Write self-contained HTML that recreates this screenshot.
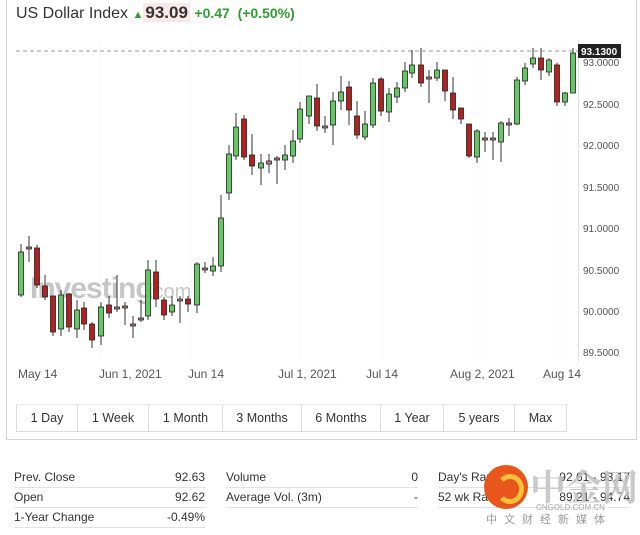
<!DOCTYPE html>
<html><head><meta charset="utf-8"><style>
body{margin:0;width:640px;height:535px;background:#fff;font-family:"Liberation Sans",Arial,sans-serif;position:relative;overflow:hidden;color:#333}
.box{position:absolute;left:6px;top:-2px;width:629px;height:441px;border:1px solid #d4d4d4;border-top:none}
.t{position:absolute;top:3px;left:16px;font-size:16px;color:#333;white-space:nowrap}
.btns{position:absolute;left:16px;top:404px;height:26px;display:flex;border:1px solid #ddd;border-top:1px solid #e8e8e8}
.btns div{border-right:1px solid #ddd;font-size:12.5px;color:#333;display:flex;align-items:center;justify-content:center;height:26px}
.btns div:last-child{border-right:none}
.st{position:absolute;font-size:12px;color:#333}
.row{position:absolute;height:20px;border-bottom:1px solid #e3e3e3;display:flex;justify-content:space-between;align-items:center}
</style></head><body>
<div class="box"></div>
<div class="t">US Dollar Index <span style="color:#2e9e2e;font-size:11px">&#9650;</span><span style="font-weight:bold;font-size:17px;background:#fbe8ea;padding:0 2px">93.09</span> <span style="color:#2e9e2e;font-weight:bold;font-size:14px">+0.47 &nbsp;(+0.50%)</span></div>
<svg width="640" height="440" style="position:absolute;left:0;top:0" font-family="Liberation Sans, Arial, sans-serif">
<g stroke="#f7f7f7" stroke-width="1">
<line x1="100" y1="40" x2="100" y2="360"/><line x1="190" y1="40" x2="190" y2="360"/><line x1="300" y1="40" x2="300" y2="360"/><line x1="382" y1="40" x2="382" y2="360"/><line x1="480" y1="40" x2="480" y2="360"/><line x1="560" y1="40" x2="560" y2="360"/>
</g>
<line x1="578.5" y1="40" x2="578.5" y2="362" stroke="#e0e0e0"/>
<text x="30" y="298" font-size="30" font-weight="bold" fill="#999" opacity="0.55" letter-spacing="-1">Investing</text>
<text x="148" y="298" font-size="20" fill="#999" opacity="0.55">.com</text>
<line x1="16" y1="51" x2="578" y2="51" stroke="#999" stroke-dasharray="4,3"/>
<g font-size="10" fill="#555">
<text x="583" y="66">93.0000</text><text x="583" y="108">92.5000</text><text x="583" y="149">92.0000</text><text x="583" y="191">91.5000</text><text x="583" y="232">91.0000</text><text x="583" y="274">90.5000</text><text x="583" y="315">90.0000</text><text x="583" y="356">89.5000</text>
</g>
<rect x="578" y="44" width="43" height="14" fill="#222"/><text x="581" y="55" font-size="10" font-weight="bold" fill="#fff">93.1300</text>
<g font-size="12" fill="#555">
<text x="18" y="378">May 14</text><text x="99" y="378">Jun 1, 2021</text><text x="188" y="378">Jun 14</text><text x="278" y="378">Jul 1, 2021</text><text x="366" y="378">Jul 14</text><text x="450" y="378">Aug 2, 2021</text><text x="543" y="378">Aug 14</text>
</g>
</svg>
<svg width="640" height="440" style="position:absolute;left:0;top:0">
<g stroke="#333" stroke-width="1">
<line x1="21" y1="244" x2="21" y2="297"/><line x1="29" y1="236" x2="29" y2="262"/><line x1="37" y1="245" x2="37" y2="288"/><line x1="45" y1="275" x2="45" y2="300"/><line x1="53" y1="296" x2="53" y2="336"/><line x1="61" y1="290" x2="61" y2="336"/><line x1="69" y1="293" x2="69" y2="332"/><line x1="77" y1="300" x2="77" y2="338"/><line x1="84" y1="302" x2="84" y2="330"/><line x1="92" y1="322" x2="92" y2="348"/><line x1="101" y1="302" x2="101" y2="345"/><line x1="109" y1="296" x2="109" y2="318"/><line x1="117" y1="275" x2="117" y2="312"/><line x1="125" y1="302" x2="125" y2="325"/><line x1="133" y1="316" x2="133" y2="338"/><line x1="141" y1="300" x2="141" y2="322"/><line x1="148" y1="260" x2="148" y2="320"/><line x1="156" y1="260" x2="156" y2="307"/><line x1="164" y1="297" x2="164" y2="320"/><line x1="172" y1="296" x2="172" y2="316"/><line x1="180" y1="296" x2="180" y2="323"/><line x1="188" y1="296" x2="188" y2="312"/><line x1="197" y1="262" x2="197" y2="313"/><line x1="205" y1="262" x2="205" y2="273"/><line x1="213" y1="257" x2="213" y2="276"/><line x1="221" y1="195" x2="221" y2="272"/><line x1="229" y1="145" x2="229" y2="200"/><line x1="236" y1="113" x2="236" y2="160"/><line x1="244" y1="115" x2="244" y2="160"/><line x1="252" y1="134" x2="252" y2="175"/><line x1="261" y1="154" x2="261" y2="185"/><line x1="269" y1="154" x2="269" y2="173"/><line x1="277" y1="156" x2="277" y2="184"/><line x1="285" y1="145" x2="285" y2="170"/><line x1="293" y1="130" x2="293" y2="163"/><line x1="300" y1="102" x2="300" y2="143"/><line x1="309" y1="96" x2="309" y2="124"/><line x1="317" y1="84" x2="317" y2="131"/><line x1="325" y1="116" x2="325" y2="133"/><line x1="333" y1="92" x2="333" y2="145"/><line x1="341" y1="76" x2="341" y2="110"/><line x1="349" y1="81" x2="349" y2="125"/><line x1="357" y1="101" x2="357" y2="139"/><line x1="365" y1="111" x2="365" y2="140"/><line x1="373" y1="78" x2="373" y2="128"/><line x1="381" y1="77" x2="381" y2="116"/><line x1="389" y1="88" x2="389" y2="122"/><line x1="397" y1="82" x2="397" y2="103"/><line x1="405" y1="62" x2="405" y2="92"/><line x1="412" y1="50" x2="412" y2="78"/><line x1="421" y1="48" x2="421" y2="87"/><line x1="429" y1="70" x2="429" y2="103"/><line x1="437" y1="62" x2="437" y2="81"/><line x1="445" y1="70" x2="445" y2="101"/><line x1="453" y1="77" x2="453" y2="119"/><line x1="461" y1="108" x2="461" y2="124"/><line x1="469" y1="124" x2="469" y2="158"/><line x1="477" y1="129" x2="477" y2="163"/><line x1="485" y1="132" x2="485" y2="152"/><line x1="493" y1="132" x2="493" y2="160"/><line x1="501" y1="121" x2="501" y2="162"/><line x1="509" y1="118" x2="509" y2="136"/><line x1="517" y1="77" x2="517" y2="125"/><line x1="525" y1="63" x2="525" y2="85"/><line x1="533" y1="48" x2="533" y2="68"/><line x1="541" y1="48" x2="541" y2="80"/><line x1="549" y1="58" x2="549" y2="76"/><line x1="557" y1="63" x2="557" y2="106"/><line x1="565" y1="92" x2="565" y2="106"/><line x1="573" y1="48" x2="573" y2="93"/>
</g>
<g stroke="#222" stroke-width="0.8">
<g fill="#62c862">
<rect x="18.5" y="252" width="5" height="43"/><rect x="58.5" y="295" width="5" height="34"/><rect x="74.5" y="310" width="5" height="19"/><rect x="98.5" y="307" width="5" height="29"/><rect x="145.5" y="270" width="5" height="46"/><rect x="169.5" y="305" width="5" height="7"/><rect x="194.5" y="264" width="5" height="41"/><rect x="210.5" y="266" width="5" height="5"/><rect x="218.5" y="218" width="5" height="48"/><rect x="226.5" y="154" width="5" height="39"/><rect x="233.5" y="127" width="5" height="29"/><rect x="258.5" y="163" width="5" height="5"/><rect x="282.5" y="155" width="5" height="5"/><rect x="290.5" y="141" width="5" height="15"/><rect x="297.5" y="109" width="5" height="30"/><rect x="306.5" y="96" width="5" height="20"/><rect x="330.5" y="101" width="5" height="24"/><rect x="338.5" y="92" width="5" height="9"/><rect x="362.5" y="124" width="5" height="13"/><rect x="370.5" y="83" width="5" height="42"/><rect x="386.5" y="94" width="5" height="18"/><rect x="394.5" y="88" width="5" height="9"/><rect x="402.5" y="71" width="5" height="17"/><rect x="409.5" y="65" width="5" height="8"/><rect x="434.5" y="70" width="5" height="8"/><rect x="474.5" y="131" width="5" height="26"/><rect x="498.5" y="123" width="5" height="19"/><rect x="514.5" y="80" width="5" height="44"/><rect x="522.5" y="68" width="5" height="13"/><rect x="530.5" y="58" width="5" height="6"/><rect x="546.5" y="60" width="5" height="12"/><rect x="562.5" y="93" width="5" height="9"/><rect x="570.5" y="53" width="5" height="40"/>
</g>
<g fill="#b32020">
<rect x="34.5" y="248" width="5" height="37"/><rect x="42.5" y="286" width="5" height="11"/><rect x="50.5" y="296" width="5" height="36"/><rect x="66.5" y="294" width="5" height="33"/><rect x="81.5" y="308" width="5" height="16"/><rect x="89.5" y="324" width="5" height="16"/><rect x="106.5" y="305" width="5" height="8"/><rect x="153.5" y="272" width="5" height="27"/><rect x="161.5" y="300" width="5" height="15"/><rect x="185.5" y="299" width="5" height="5"/><rect x="241.5" y="119" width="5" height="38"/><rect x="249.5" y="155" width="5" height="11"/><rect x="314.5" y="98" width="5" height="28"/><rect x="346.5" y="87" width="5" height="23"/><rect x="354.5" y="116" width="5" height="19"/><rect x="378.5" y="79" width="5" height="32"/><rect x="418.5" y="65" width="5" height="18"/><rect x="442.5" y="70" width="5" height="21"/><rect x="450.5" y="93" width="5" height="17"/><rect x="458.5" y="108" width="5" height="11"/><rect x="466.5" y="124" width="5" height="32"/><rect x="538.5" y="58" width="5" height="12"/><rect x="554.5" y="65" width="5" height="37"/>
</g>
<g fill="#c87a7a">
<rect x="26.5" y="247" width="5" height="2"/><rect x="114.5" y="307" width="5" height="2"/><rect x="122.5" y="306" width="5" height="2"/><rect x="130.5" y="324" width="5" height="2"/><rect x="138.5" y="318" width="5" height="2"/><rect x="177.5" y="299" width="5" height="2"/><rect x="202.5" y="268" width="5" height="2"/><rect x="266.5" y="161" width="5" height="3"/><rect x="274.5" y="158" width="5" height="2"/><rect x="322.5" y="126" width="5" height="2"/><rect x="426.5" y="77" width="5" height="2"/><rect x="482.5" y="138" width="5" height="2"/><rect x="490.5" y="138" width="5" height="2"/><rect x="506.5" y="123" width="5" height="2"/>
</g>
</g>
</svg>
<div class="btns">
<div style="width:60px">1 Day</div><div style="width:70px">1 Week</div><div style="width:73px">1 Month</div><div style="width:78px">3 Months</div><div style="width:78px">6 Months</div><div style="width:62px">1 Year</div><div style="width:70px">5 years</div><div style="width:51px">Max</div>
</div>
<div class="st">
<div class="row" style="left:14px;top:467px;width:191px"><span>Prev. Close</span><span>92.63</span></div>
<div class="row" style="left:14px;top:487px;width:191px"><span>Open</span><span>92.62</span></div>
<div class="row" style="left:14px;top:507px;width:191px"><span>1-Year Change</span><span>-0.49%</span></div>
<div class="row" style="left:226px;top:467px;width:192px"><span>Volume</span><span>0</span></div>
<div class="row" style="left:226px;top:487px;width:192px"><span>Average Vol. (3m)</span><span>-</span></div>
<div class="row" style="left:438px;top:467px;width:192px"><span>Day's Range</span><span>92.61 - 93.17</span></div>
<div class="row" style="left:438px;top:487px;width:192px"><span>52 wk Range</span><span>89.21 - 94.74</span></div>
</div>
<div style="position:absolute;left:484px;top:465px;width:44px;height:44px;border-radius:50%;background:#e8561c"></div>
<div style="position:absolute;left:496px;top:474px;width:18px;height:20px;border-radius:50%;border:5px solid #f7c23a;border-left-color:transparent"></div>
<div style="position:absolute;left:530px;top:460px;font-size:36px;font-family:'Noto Serif CJK SC','Noto Sans CJK SC',serif;color:#c0c0c0;font-weight:bold;opacity:0.85">中金网</div>
<div style="position:absolute;left:536px;top:503px;font-size:8px;color:#aaa">CNGOLD.COM.CN</div>
<div style="position:absolute;left:486px;top:511px;font-size:11px;letter-spacing:7px;color:#999;font-family:'Noto Sans CJK SC',sans-serif">中文财经新媒体</div>
</body></html>
